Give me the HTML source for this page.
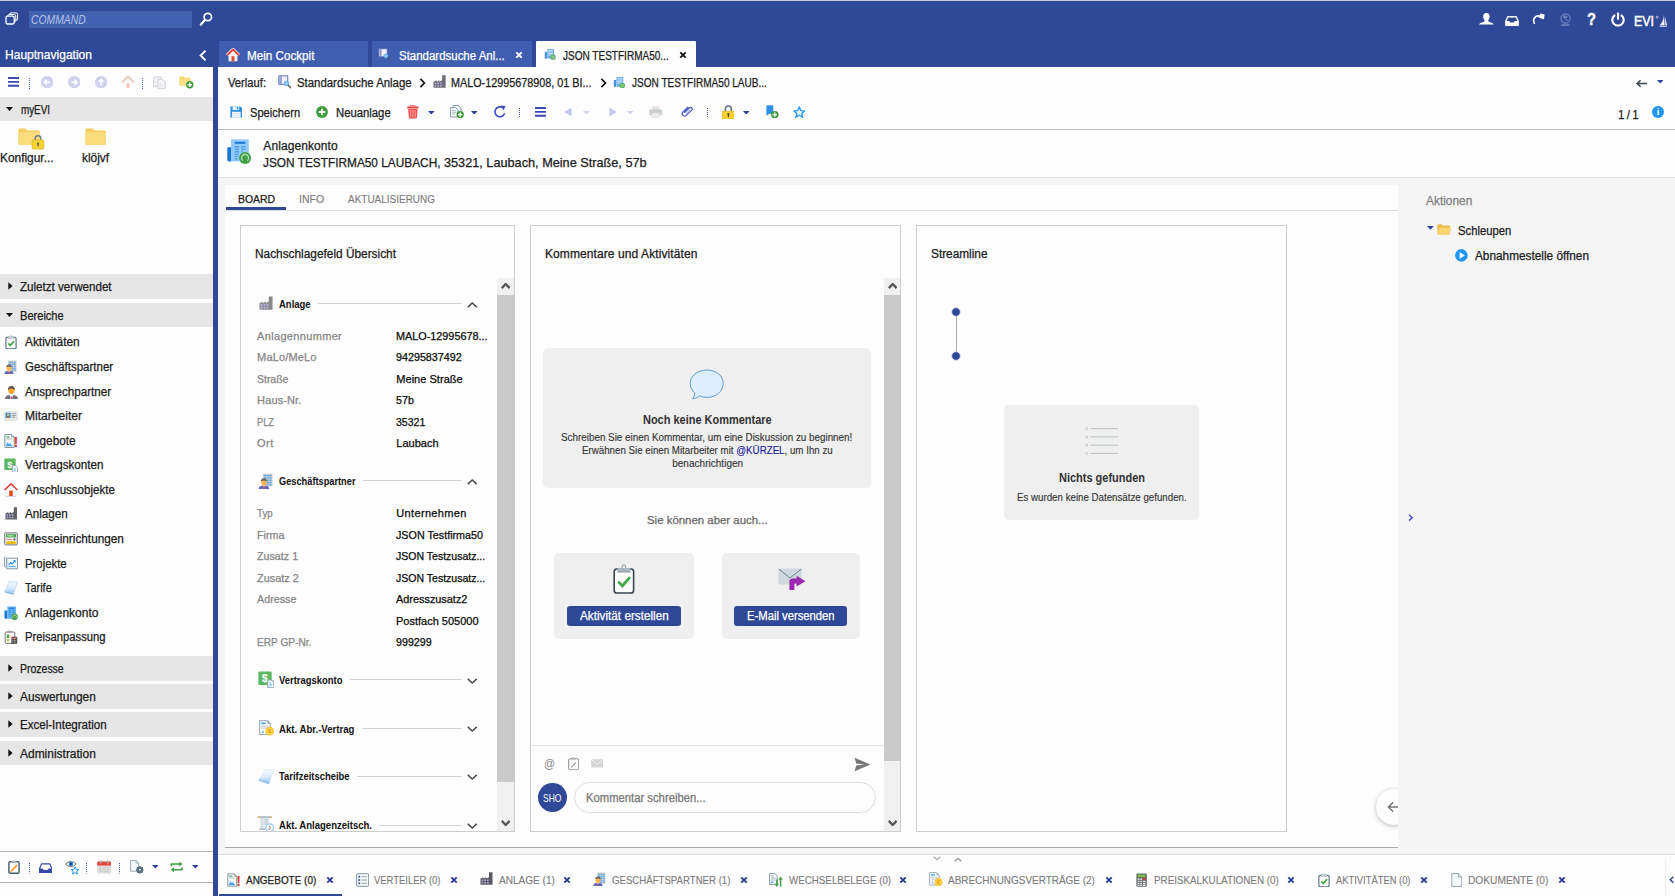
<!DOCTYPE html>
<html lang="de"><head><meta charset="utf-8"><title>EVI - Anlagenkonto</title>
<style>
*{margin:0;padding:0;box-sizing:border-box}
html,body{width:1675px;height:896px;overflow:hidden;background:#fdfdfd;font-family:"Liberation Sans", sans-serif;}
#app{position:relative;width:1675px;height:896px;overflow:hidden;background:#fdfdfd}
.r{position:absolute;display:block}
.t{position:absolute;white-space:nowrap;display:block;transform-origin:0 50%;-webkit-text-stroke:0.25px currentColor}
</style></head>
<body><div id="app">
<div class="r" style="left:0px;top:0px;width:1675px;height:67px;background:#2f4898;"></div>
<div class="r" style="left:0px;top:0px;width:1675px;height:1px;background:#c9cede;"></div>
<div class="r" style="left:213px;top:67px;width:5px;height:829px;background:#2f4898;"></div>
<div class="r" style="left:218px;top:177px;width:1457px;height:678px;background:#f5f5f5;"></div>
<div class="r" style="left:218px;top:129px;width:1457px;height:1px;background:#b9b9b9;"></div>
<div class="r" style="left:218px;top:177px;width:1457px;height:1px;background:#e2e2e2;"></div>
<div class="r" style="left:225px;top:185px;width:1173px;height:662px;background:#fdfdfd;"></div>
<div class="r" style="left:225px;top:210px;width:1173px;height:1px;background:#dcdcdc;"></div>
<div class="r" style="left:225px;top:847px;width:1173px;height:1px;background:#a9a9a9;"></div>
<div class="r" style="left:218px;top:854px;width:1457px;height:1px;background:#dedede;"></div>
<div class="r" style="left:218px;top:855px;width:1457px;height:41px;background:#fdfdfd;"></div>
<svg class="r" style="left:5px;top:11.5px;" width="14" height="14" viewBox="0 0 14 14"><rect x="4.6" y="0.9" width="8" height="7.4" rx="1.4" fill="#2f4898" stroke="#fff" stroke-width="1"/><rect x="2.8" y="2.5" width="8" height="7.4" rx="1.4" fill="#2f4898" stroke="#fff" stroke-width="1"/><rect x="1" y="4.2" width="8.2" height="7.8" rx="1.4" fill="#2f4898" stroke="#fff" stroke-width="1.3"/></svg>
<div class="r" style="left:29px;top:11px;width:163px;height:17px;background:#4161b1;"></div>
<span class="t" style="transform:scaleX(0.8638);left:30.6px;top:12.21px;font-size:12px;line-height:16px;color:#b4c1e6;font-style:italic;-webkit-text-stroke:0;">COMMAND</span>
<svg class="r" style="left:199px;top:11px;" width="15" height="16" viewBox="0 0 15 16"><circle cx="8.8" cy="6" r="3.7" fill="none" stroke="#fff" stroke-width="1.7"/><path d="M6.2 8.8 L1.8 13.6" stroke="#fff" stroke-width="2.2" stroke-linecap="round"/></svg>
<span class="t" style="letter-spacing:0.018px;left:5px;top:47.41px;font-size:12px;line-height:16px;color:#fff;">Hauptnavigation</span>
<svg class="r" style="left:198px;top:49px;" width="10" height="13" viewBox="0 0 10 13"><path d="M7.6 1.6 L2.6 6.5 L7.6 11.4" fill="none" stroke="#fff" stroke-width="1.9"/></svg>
<div class="r" style="left:219px;top:41px;width:149px;height:26px;background:#3f5eaf;"></div>
<div class="r" style="left:372px;top:41px;width:160px;height:26px;background:#3f5eaf;"></div>
<div class="r" style="left:536px;top:41px;width:160px;height:26px;background:#fdfdfd;border-radius:1px 1px 0 0;"></div>
<span class="t" style="transform:scaleX(0.9718);left:246.6px;top:48.21px;font-size:12px;line-height:16px;color:#fff;">Mein Cockpit</span>
<span class="t" style="transform:scaleX(0.9553);left:399px;top:48.21px;font-size:12px;line-height:16px;color:#fff;">Standardsuche Anl...</span>
<span class="t" style="transform:scaleX(0.8358);left:563px;top:48.21px;font-size:12px;line-height:16px;color:#1a1a1a;">JSON TESTFIRMA50...</span>
<svg class="r" style="left:514px;top:50.4px;" width="10" height="10" viewBox="0 0 10 10"><path d="M2.3 2.3 L7.7 7.7 M7.7 2.3 L2.3 7.7" stroke="#fff" stroke-width="1.9"/></svg>
<svg class="r" style="left:677.8px;top:50.4px;" width="10" height="10" viewBox="0 0 10 10"><path d="M2.3 2.3 L7.7 7.7 M7.7 2.3 L2.3 7.7" stroke="#111" stroke-width="1.9"/></svg>
<svg class="r" style="left:1479px;top:13.4px;" width="15" height="12" viewBox="0 0 15 12"><ellipse cx="7.4" cy="3.7" rx="3.2" ry="3.7" fill="#fff"/><path d="M5.6 6.4 H9.2 V8 Q9.4 8.8 11.2 9.3 Q14.6 10 14.8 11.6 H0 Q0.2 10 3.6 9.3 Q5.4 8.8 5.6 8 Z" fill="#fff"/></svg>
<svg class="r" style="left:1505.4px;top:15.6px;" width="14" height="10" viewBox="0 0 14 10"><path d="M2.8 0.8 H11.2 L13.2 5 V9.2 H0.8 V5 Z" fill="none" stroke="#fff" stroke-width="1.4" stroke-linejoin="round"/><path d="M0.8 5 H4.2 L5.2 6.6 H8.8 L9.8 5 H13.2 V9.2 H0.8 Z" fill="#fff"/></svg>
<svg class="r" style="left:1532px;top:13px;" width="13" height="12" viewBox="0 0 13 12"><path d="M2.6 10.8 C-0.2 6 3.6 1.6 8.6 3.4" fill="none" stroke="#fff" stroke-width="1.6"/><path d="M8.4 0.6 L12.6 1.4 L12 6.4 L6.6 4.6 Z" fill="#fff"/></svg>
<svg class="r" style="left:1559px;top:13px;" width="13" height="14" viewBox="0 0 13 14"><circle cx="6.5" cy="5.5" r="4.6" fill="none" stroke="#6f80b8" stroke-width="1.2"/><path d="M4 3 Q7 1.5 8.5 4 Q7 6.5 5 5 Z M6 7 Q8.5 6 9.5 8" fill="#6f80b8" stroke="#6f80b8" stroke-width=".6"/><rect x="2.5" y="11.2" width="8" height="1.8" fill="#6f80b8"/></svg>
<span class="t" style="transform:scaleX(0.8662);left:1587.2px;top:9.88px;font-size:17px;line-height:20px;color:#fff;font-weight:700;-webkit-text-stroke:0;-webkit-text-stroke:0.4px #fff;">?</span>
<svg class="r" style="left:1611px;top:12px;" width="14" height="15" viewBox="0 0 14 15"><path d="M4.2 3 A5.7 5.7 0 1 0 9.8 3" fill="none" stroke="#fff" stroke-width="2.1"/><path d="M7 0.6 V7.6" stroke="#fff" stroke-width="2.1"/></svg>
<span class="t" style="transform:scaleX(0.8858);left:1634.4px;top:12.32px;font-size:14px;line-height:18px;color:#fff;-webkit-text-stroke:0.5px #fff;">EVI</span>
<svg class="r" style="left:1655px;top:13px;" width="13" height="15" viewBox="0 0 13 15"><circle cx="2.2" cy="4.2" r="1" fill="none" stroke="#e6e9f4" stroke-width=".7"/><path d="M9 1.4 Q8.6 8 4.6 12.6 H9.6 Z" fill="#fff" opacity=".92"/><path d="M9.9 3.4 Q11.2 8 12.2 12.4 L10.3 12.6 Z" fill="#dfe4f2"/><path d="M4.2 13.2 H12 L11.4 14 H5 Z" fill="#e8ebf5"/></svg>
<svg class="r" style="left:226.2px;top:47.8px;opacity:1;" width="14" height="14" viewBox="0 0 14 14"><path d="M1 7.4 L7 1.6 L13 7.4" fill="none" stroke="#f4f4f4" stroke-width="3.4" stroke-linejoin="miter"/><path d="M2.6 7 L7 2.9 L11.4 7 V13.2 H2.6 Z" fill="#f6f6f6"/><path d="M1 7.4 L7 1.6 L13 7.4" fill="none" stroke="#d9432f" stroke-width="1.8" stroke-linejoin="miter"/><rect x="5.5" y="8.2" width="3" height="5" fill="#e04a30"/></svg>
<svg class="r" style="left:378px;top:47.5px;" width="12.8" height="12.8" viewBox="0 0 16 16"><rect x="1" y="1" width="10.5" height="10" fill="#eef0fb" stroke="#5563b8" stroke-width="1"/><path d="M3.6 1 V11" stroke="#5563b8" stroke-width="1"/><path d="M1 3.6 H3.6 M1 6 H3.6 M1 8.4 H3.6" stroke="#5563b8" stroke-width=".8"/><circle cx="10" cy="10" r="2.7" fill="#8fd0f6" stroke="#4a9be0" stroke-width=".9"/><path d="M12 12 L15 15" stroke="#555" stroke-width="1.6" stroke-linecap="round"/></svg>
<svg class="r" style="left:544px;top:48px;" width="12.48" height="12.48" viewBox="0 0 16 16"><rect x="1" y="5" width="3" height="8.5" fill="#4a90e2"/><rect x="4.2" y="1.2" width="8.6" height="12.3" fill="#6fb1f0"/><path d="M5.4 3 H11.6 M5.4 5 H11.6 M5.4 7 H11.6 M5.4 9 H11.6" stroke="#d7ebfc" stroke-width="1"/><circle cx="11.6" cy="11.8" r="3.4" fill="#4caf50"/><circle cx="11.6" cy="11.8" r="1.6" fill="none" stroke="#bfe6c1" stroke-width=".9"/></svg>
<svg class="r" style="left:8px;top:77px;" width="11" height="10" viewBox="0 0 11 10"><path d="M0 1 H11 M0 4.9 H11 M0 8.8 H11" stroke="#3a4ab0" stroke-width="1.9"/></svg>
<svg class="r" style="left:28.8px;top:77.9px;" width="1" height="11" viewBox="0 0 1 11"><path d="M0.5 0 V11" stroke="#4b5fb0" stroke-width="1" stroke-dasharray="1 1"/></svg>
<svg class="r" style="left:41px;top:75.8px;" width="12.4" height="12.4" viewBox="0 0 12.4 12.4"><circle cx="6.2" cy="6.2" r="6.2" fill="#cfd1ee"/><path d="M9 6.2 H3.6 M5.8 3.8 L3.4 6.2 L5.8 8.6" fill="none" stroke="#fff" stroke-width="1.6"/></svg>
<svg class="r" style="left:68px;top:75.8px;" width="12.4" height="12.4" viewBox="0 0 12.4 12.4"><circle cx="6.2" cy="6.2" r="6.2" fill="#cfd1ee"/><path d="M3.4 6.2 H8.8 M6.6 3.8 L9 6.2 L6.6 8.6" fill="none" stroke="#fff" stroke-width="1.6"/></svg>
<svg class="r" style="left:94.5px;top:75.8px;" width="12.4" height="12.4" viewBox="0 0 12.4 12.4"><circle cx="6.2" cy="6.2" r="6.2" fill="#cfd1ee"/><path d="M6.2 9 V3.6 M3.8 5.8 L6.2 3.4 L8.6 5.8" fill="none" stroke="#fff" stroke-width="1.6"/></svg>
<svg class="r" style="left:120.5px;top:75px;opacity:0.3;" width="14" height="14" viewBox="0 0 14 14"><path d="M2.6 7 L7 2.9 L11.4 7 V13.2 H2.6 Z" fill="#f6f6f6"/><path d="M1 7.4 L7 1.6 L13 7.4" fill="none" stroke="#d9432f" stroke-width="1.8" stroke-linejoin="miter"/><rect x="5.5" y="8.2" width="3" height="5" fill="#e04a30"/></svg>
<svg class="r" style="left:141.8px;top:77.9px;" width="1" height="11" viewBox="0 0 1 11"><path d="M0.5 0 V11" stroke="#4b5fb0" stroke-width="1" stroke-dasharray="1 1"/></svg>
<svg class="r" style="left:153px;top:76px;" width="13" height="13" viewBox="0 0 13 13"><rect x="0.6" y="1" width="7.4" height="9.4" fill="#f1f1f3" stroke="#d3d4dc"/><path d="M5 3.4 H9.6 L12.2 6 V12.4 H5 Z" fill="#f7f7f9" stroke="#cfd0d9"/><path d="M6.6 8 H10.4 M6.6 10 H10.4" stroke="#dcdde4" stroke-width=".9"/></svg>
<svg class="r" style="left:178.5px;top:75px;" width="15" height="14" viewBox="0 0 15 14"><path d="M0.5 1.5 H4.8 L6 2.8 H11.5 V10.5 H0.5 Z" fill="#f7d56b"/><path d="M0.5 3.6 H11.5 V10.5 H0.5 Z" fill="#fbdf83"/><circle cx="10.8" cy="9.8" r="3.7" fill="#3d9b3d"/><path d="M10.8 7.6 V12 M8.6 9.8 H13" stroke="#fff" stroke-width="1.5"/></svg>
<div class="r" style="left:0px;top:96.6px;width:213px;height:24.2px;background:#e6e6e6;"></div>
<svg class="r" style="left:6px;top:106.7px;" width="7" height="4" viewBox="0 0 7 4"><path d="M0 0 H7 L3.5 4 Z" fill="#111"/></svg>
<span class="t" style="transform:scaleX(0.8205);left:20.6px;top:101.51px;font-size:12px;line-height:16px;color:#1a1a1a;">myEVI</span>
<svg class="r" style="left:18px;top:127.5px;" width="28" height="22" viewBox="0 0 28 22"><path d="M0.5 1.2 Q0.5 0.5 1.3 0.5 H7.6 L9.4 2.4 H21 Q21.8 2.4 21.8 3.2 V16 Q21.8 16.8 21 16.8 H1.3 Q0.5 16.8 0.5 16 Z" fill="#f3cd60"/><path d="M0.5 4.2 H21.8 V16 Q21.8 16.8 21 16.8 H1.3 Q0.5 16.8 0.5 16 Z" fill="#fbdc7d"/><path d="M17.2 12.4 V10.6 A2.8 2.8 0 0 1 22.8 10.6 V12.4" fill="none" stroke="#6a7f8c" stroke-width="1.4"/><rect x="14.2" y="12" width="11.6" height="9" rx="1" fill="#f7d530" stroke="#d9ad1a" stroke-width=".7"/><circle cx="20" cy="15.6" r="1.1" fill="#55606a"/><rect x="19.4" y="15.6" width="1.2" height="3" fill="#55606a"/></svg>
<svg class="r" style="left:85px;top:127.5px;" width="22" height="18" viewBox="0 0 22 18"><path d="M0.5 1.2 Q0.5 0.5 1.3 0.5 H7.6 L9.4 2.4 H20 Q20.8 2.4 20.8 3.2 V16 Q20.8 16.8 20 16.8 H1.3 Q0.5 16.8 0.5 16 Z" fill="#f3cd60"/><path d="M0.5 4.2 H20.8 V16 Q20.8 16.8 20 16.8 H1.3 Q0.5 16.8 0.5 16 Z" fill="#fbdc7d"/></svg>
<span class="t" style="transform:scaleX(0.9917);left:-0.2px;top:150.21px;font-size:12px;line-height:16px;color:#1a1a1a;">Konfigur...</span>
<span class="t" style="transform:scaleX(0.9911);left:81.5px;top:150.21px;font-size:12px;line-height:16px;color:#1a1a1a;">klöjvf</span>
<div class="r" style="left:0px;top:274px;width:213px;height:24.5px;background:#e6e6e6;"></div>
<svg class="r" style="left:7.5px;top:282.3px;" width="5" height="8" viewBox="0 0 5 8"><path d="M0.3 0.3 L4.6 4 L0.3 7.7 Z" fill="#111"/></svg>
<span class="t" style="transform:scaleX(0.9671);left:20px;top:279.01px;font-size:12px;line-height:16px;color:#1a1a1a;">Zuletzt verwendet</span>
<div class="r" style="left:0px;top:303px;width:213px;height:24px;background:#e6e6e6;"></div>
<svg class="r" style="left:6px;top:313.0px;" width="7" height="4" viewBox="0 0 7 4"><path d="M0 0 H7 L3.5 4 Z" fill="#111"/></svg>
<span class="t" style="transform:scaleX(0.9224);left:20px;top:308.01px;font-size:12px;line-height:16px;color:#1a1a1a;">Bereiche</span>
<div class="r" style="left:0px;top:656px;width:213px;height:24.5px;background:#e6e6e6;"></div>
<svg class="r" style="left:7.5px;top:664.3px;" width="5" height="8" viewBox="0 0 5 8"><path d="M0.3 0.3 L4.6 4 L0.3 7.7 Z" fill="#111"/></svg>
<span class="t" style="transform:scaleX(0.8735);left:20px;top:661.01px;font-size:12px;line-height:16px;color:#1a1a1a;">Prozesse</span>
<div class="r" style="left:0px;top:684px;width:213px;height:24.5px;background:#e6e6e6;"></div>
<svg class="r" style="left:7.5px;top:692.3px;" width="5" height="8" viewBox="0 0 5 8"><path d="M0.3 0.3 L4.6 4 L0.3 7.7 Z" fill="#111"/></svg>
<span class="t" style="transform:scaleX(0.9880);left:20px;top:689.01px;font-size:12px;line-height:16px;color:#1a1a1a;">Auswertungen</span>
<div class="r" style="left:0px;top:712px;width:213px;height:24.5px;background:#e6e6e6;"></div>
<svg class="r" style="left:7.5px;top:720.3px;" width="5" height="8" viewBox="0 0 5 8"><path d="M0.3 0.3 L4.6 4 L0.3 7.7 Z" fill="#111"/></svg>
<span class="t" style="transform:scaleX(0.9617);left:20px;top:717.01px;font-size:12px;line-height:16px;color:#1a1a1a;">Excel-Integration</span>
<div class="r" style="left:0px;top:740.8px;width:213px;height:24.5px;background:#e6e6e6;"></div>
<svg class="r" style="left:7.5px;top:749.0999999999999px;" width="5" height="8" viewBox="0 0 5 8"><path d="M0.3 0.3 L4.6 4 L0.3 7.7 Z" fill="#111"/></svg>
<span class="t" style="transform:scaleX(0.9970);left:20px;top:745.81px;font-size:12px;line-height:16px;color:#1a1a1a;">Administration</span>
<span class="t" style="transform:scaleX(0.9881);left:25px;top:334.41px;font-size:12px;line-height:16px;color:#1a1a1a;">Aktivitäten</span>
<svg class="r" style="left:4px;top:335.2px;" width="14" height="14" viewBox="0 0 14 14"><rect x="1.9" y="2.4" width="10.2" height="11.4" rx="1.3" fill="#fff" stroke="#546e7a" stroke-width="1.1"/><path d="M4 3.4 V2 Q4 1.5 4.5 1.5 H5.9 Q7 -0.4 8.1 1.5 H9.5 Q10 1.5 10 2 V3.4 Z" fill="#cfd8dc" stroke="#90a4ae" stroke-width=".5"/><path d="M4.3 8.4 L6.3 10.4 L10 6.2" fill="none" stroke="#3faa3f" stroke-width="1.7"/></svg>
<span class="t" style="transform:scaleX(0.9571);left:25px;top:358.99px;font-size:12px;line-height:16px;color:#1a1a1a;">Geschäftspartner</span>
<svg class="r" style="left:3.2px;top:359.78px;" width="14" height="14" viewBox="0 0 14 14"><rect x="5.2" y="0.6" width="8.2" height="11" fill="#c9c9c9"/><g fill="#42a5f5"><rect x="6.1" y="1.8" width="1.7" height="1"/><rect x="8.5" y="1.8" width="1.7" height="1"/><rect x="10.9" y="1.8" width="1.7" height="1"/><rect x="6.1" y="3.8" width="1.7" height="1"/><rect x="8.5" y="3.8" width="1.7" height="1"/><rect x="10.9" y="3.8" width="1.7" height="1"/><rect x="8.5" y="5.8" width="1.7" height="1"/><rect x="10.9" y="5.8" width="1.7" height="1"/><rect x="8.5" y="7.8" width="1.7" height="1"/><rect x="10.9" y="7.8" width="1.7" height="1"/><rect x="8.5" y="9.6" width="1.7" height="1"/><rect x="10.9" y="9.6" width="1.7" height="1"/></g><path d="M3.4 7.2 Q3.4 4.6 6 4.6 Q8.6 4.6 8.6 7.2 Z" fill="#5c5f66"/><ellipse cx="6" cy="8.4" rx="2.3" ry="2.7" fill="#ffb74d"/><path d="M3.6 7.2 Q6 5.6 8.4 7.2 L8.4 6.4 Q6 4.6 3.6 6.4 Z" fill="#5c5f66"/><path d="M1.4 14 Q1.4 11.2 4.4 11 L6 12 L7.6 11 Q10.6 11.2 10.6 14 Z" fill="#5c6bc0"/><path d="M5.6 11.4 H6.4 L6.6 13.4 L6 14 L5.4 13.4 Z" fill="#ef5350"/></svg>
<span class="t" style="transform:scaleX(0.9705);left:25px;top:383.57px;font-size:12px;line-height:16px;color:#1a1a1a;">Ansprechpartner</span>
<svg class="r" style="left:4.3px;top:384.66px;" width="14.84" height="14.84" viewBox="0 0 14 14"><path d="M3.8 5 Q3.8 1 7 1 Q10.2 1 10.2 5 Z" fill="#4a4a50"/><ellipse cx="7" cy="5.2" rx="2.9" ry="3.3" fill="#ffa726"/><path d="M4 4.4 Q7 2.4 10 4.4 L10 3.4 Q7 0.6 4 3.4 Z" fill="#4a4a50"/><path d="M0.8 14 Q0.8 9.8 4.8 9.4 L7 11 L9.2 9.4 Q13.2 9.8 13.2 14 Z" fill="#69727a"/><path d="M5.6 9.6 L7 10.6 L8.4 9.6 L7.6 13.6 H6.4 Z" fill="#eceff1"/><path d="M6.6 10.6 H7.4 L7.7 13.2 L7 14 L6.3 13.2 Z" fill="#ec407a"/></svg>
<span class="t" style="letter-spacing:0.028px;left:25px;top:408.15px;font-size:12px;line-height:16px;color:#1a1a1a;">Mitarbeiter</span>
<svg class="r" style="left:4px;top:408.94px;" width="14" height="14" viewBox="0 0 14 14"><rect x="0.6" y="2.6" width="12.8" height="8.6" rx="0.8" fill="#e8eaed" stroke="#cfd3d8" stroke-width=".6"/><rect x="1.6" y="3.8" width="5" height="5.2" fill="#1e88e5"/><circle cx="4.1" cy="5.8" r="1.3" fill="#ffb74d"/><path d="M2.2 9 Q2.2 7.4 4.1 7.4 Q6 7.4 6 9 Z" fill="#ef6c00"/><path d="M7.8 4.6 H12.2 M7.8 6.4 H12.2 M7.8 8.2 H11" stroke="#9aa3ab" stroke-width="1"/></svg>
<span class="t" style="transform:scaleX(0.9866);left:25px;top:432.73px;font-size:12px;line-height:16px;color:#1a1a1a;">Angebote</span>
<svg class="r" style="left:4px;top:433.52px;" width="14" height="14" viewBox="0 0 14 14"><path d="M0.9 0.6 H7.8 L10.2 3 V13.4 H0.9 Z" fill="#fff" stroke="#78909c" stroke-width="1"/><path d="M7.6 0.8 V3.2 H10" fill="none" stroke="#78909c" stroke-width=".8"/><path d="M2.4 3 H5.6" stroke="#2e7d32" stroke-width="1"/><path d="M2.4 5 H8.2" stroke="#90a4ae" stroke-width=".8"/><path d="M2 11.6 L3.6 8 L5 10.2 L6.2 8.8 L7.8 11.6 Z" fill="#42a5f5"/><path d="M2 11.8 H8.4" stroke="#1e88e5" stroke-width=".8"/><text x="12" y="13.4" text-anchor="middle" font-family="Liberation Sans, sans-serif" font-weight="700" font-size="14.6" fill="#e53935">!</text></svg>
<span class="t" style="transform:scaleX(0.9738);left:25px;top:457.31px;font-size:12px;line-height:16px;color:#1a1a1a;">Vertragskonten</span>
<svg class="r" style="left:4px;top:458.09999999999997px;" width="14" height="14" viewBox="0 0 14 14"><rect x="0.3" y="0.4" width="11.4" height="11.6" rx="1" fill="#5cb860"/><text x="5.9" y="9.6" text-anchor="middle" font-family="Liberation Sans, sans-serif" font-weight="700" font-size="9.6" fill="#fff">$</text><path d="M8.3 7.6 H11.6 L13.6 9.6 V14.2 H8.3 Z" fill="#fff" stroke="#90a4ae" stroke-width=".9"/><path d="M9.6 10 H11.4 M9.6 11.4 H12.2 M9.6 12.8 H11.6" stroke="#64b5f6" stroke-width=".8"/></svg>
<span class="t" style="transform:scaleX(0.9616);left:25px;top:481.89px;font-size:12px;line-height:16px;color:#1a1a1a;">Anschlussobjekte</span>
<svg class="r" style="left:4px;top:482.67999999999995px;" width="14" height="14" viewBox="0 0 14 14"><path d="M0.6 7 L7 0.9 L13.4 7" fill="none" stroke="#e53935" stroke-width="1.7"/><path d="M2.4 6.8 L7 2.6 L11.6 6.8 V13.4 H2.4 Z" fill="#fbfbfe" stroke="#e4e4f0" stroke-width=".6"/><path d="M1.6 13.4 H12.4" stroke="#d4d6ee" stroke-width="1.2"/><rect x="5.2" y="7.6" width="3.6" height="5.4" fill="#e64a19"/><rect x="5.6" y="5.6" width="2.8" height="1.6" fill="#e64a19" opacity=".0"/></svg>
<span class="t" style="transform:scaleX(0.9694);left:25px;top:506.47px;font-size:12px;line-height:16px;color:#1a1a1a;">Anlagen</span>
<svg class="r" style="left:4.8px;top:507.46px;" width="12.6" height="12.6" viewBox="0 0 14 14"><path d="M0.5 13.8 V7.2 L3.6 5.6 V7.2 L6.8 5.6 V7.2 L9.8 5.6 V0.4 H13.6 V13.8 Z" fill="#606068"/><g fill="#b7b2f0"><rect x="1.8" y="8.2" width="1.7" height="1.6"/><rect x="4.7" y="8.2" width="1.7" height="1.6"/><rect x="7.6" y="8.2" width="1.7" height="1.6"/><rect x="1.8" y="10.9" width="1.7" height="1.6"/><rect x="4.7" y="10.9" width="1.7" height="1.6"/><rect x="7.6" y="10.9" width="1.7" height="1.6"/></g></svg>
<span class="t" style="transform:scaleX(0.9818);left:25px;top:531.05px;font-size:12px;line-height:16px;color:#1a1a1a;">Messeinrichtungen</span>
<svg class="r" style="left:4px;top:531.8399999999999px;" width="14" height="14" viewBox="0 0 14 14"><rect x="0.7" y="0.9" width="12.6" height="12" rx="0.8" fill="#f3f3f3" stroke="#6d7378" stroke-width="1"/><rect x="2" y="2.2" width="10" height="3.2" fill="#43a047"/><rect x="3" y="3" width="6.4" height="1.6" fill="#a5d6a7"/><circle cx="10.4" cy="7.4" r="1.1" fill="#455a64"/><path d="M2.4 7.4 H8" stroke="#e57373" stroke-width=".9"/><rect x="2" y="9.4" width="10" height="2.6" fill="#f9c81c"/><path d="M4 9.4 V12 M6 9.4 V12 M8 9.4 V12 M10 9.4 V12" stroke="#c79a00" stroke-width=".6"/></svg>
<span class="t" style="transform:scaleX(0.9471);left:25px;top:555.63px;font-size:12px;line-height:16px;color:#1a1a1a;">Projekte</span>
<svg class="r" style="left:4px;top:556.42px;" width="14" height="14" viewBox="0 0 14 14"><path d="M1.6 0.8 Q0.5 0.8 0.5 2 V10 Q0.5 11.2 1.6 11.2 Q2.8 11.2 2.8 10 V2.2" fill="#e3f2fd" stroke="#78909c" stroke-width=".8"/><rect x="2.8" y="2.2" width="10.6" height="10.6" fill="#f5fbff" stroke="#78909c" stroke-width=".9"/><path d="M4.6 8.8 L6.6 6.6 L8 7.8 L11 4.8" fill="none" stroke="#1e88e5" stroke-width="1.2"/><path d="M9.4 4.6 H11.2 V6.4" fill="none" stroke="#1e88e5" stroke-width="1"/><path d="M4.4 10.6 H11.6" stroke="#42a5f5" stroke-width="1"/></svg>
<span class="t" style="transform:scaleX(0.9099);left:25px;top:580.21px;font-size:12px;line-height:16px;color:#1a1a1a;">Tarife</span>
<svg class="r" style="left:4px;top:581.0px;" width="14" height="14" viewBox="0 0 14 14"><defs><linearGradient id="tg1" x1="0" y1="0" x2="0" y2="1"><stop offset="0" stop-color="#f3f9ff"/><stop offset=".55" stop-color="#d6e9fb"/><stop offset="1" stop-color="#8fc2ee"/></linearGradient></defs><path d="M4.6 0.8 H13.4 Q11.4 8 9.4 13.2 L0.6 11 Q3.4 6 4.6 0.8 Z" fill="url(#tg1)" stroke="#b5d5f2" stroke-width=".6"/><path d="M0.8 11 L9.4 13.2" stroke="#6fa8dc" stroke-width=".8"/></svg>
<span class="t" style="letter-spacing:0.008px;left:25px;top:604.79px;font-size:12px;line-height:16px;color:#1a1a1a;">Anlagenkonto</span>
<svg class="r" style="left:4px;top:605.5799999999999px;" width="14" height="14" viewBox="0 0 14 14"><path d="M0.5 4.6 H3.4 V12.8 H1.7 Q0.5 12.8 0.5 11.6 Z" fill="#1976d2"/><rect x="3.4" y="0.5" width="8.6" height="12.3" fill="#64b5f6"/><path d="M4.8 2.2 H10.6" stroke="#1976d2" stroke-width="1.1"/><path d="M4.8 4.6 H7 M8.2 4.6 H10.6 M4.8 6.4 H7 M8.2 6.4 H10.6 M4.8 8.2 H7 M4.8 10 H6.6" stroke="#2f8ae0" stroke-width=".9"/><circle cx="10.6" cy="10.8" r="3.2" fill="#43a047"/><path d="M9.4 12 A1.7 1.7 0 1 1 11.8 12" fill="none" stroke="#c8e6c9" stroke-width=".8"/></svg>
<span class="t" style="transform:scaleX(0.9365);left:25px;top:629.37px;font-size:12px;line-height:16px;color:#1a1a1a;">Preisanpassung</span>
<svg class="r" style="left:4px;top:630.16px;" width="14" height="14" viewBox="0 0 14 14"><rect x="1.2" y="2" width="9.6" height="11.4" rx="1" fill="#fafafa" stroke="#757575" stroke-width="1"/><path d="M4 2.2 V1.4 H5 Q6 0 7 1.4 H8 V2.2 Z" fill="#bdbdbd" stroke="#8a8a8a" stroke-width=".5"/><rect x="2.8" y="4.6" width="2.2" height="3.4" fill="#43a047"/><path d="M5.6 5.6 L7.4 6.6 L5.6 7.6 Z" fill="#fbc02d"/><rect x="2.8" y="9" width="2.2" height="2.6" fill="#9ccc65"/><rect x="7.4" y="6.8" width="5.8" height="7" rx=".6" fill="#424242"/><rect x="8.2" y="7.6" width="4.2" height="1.6" fill="#e57373"/><path d="M8.4 10.4 H12.2 M8.4 12.2 H12.2" stroke="#bdbdbd" stroke-width="1" stroke-dasharray="1 .5"/></svg>
<div class="r" style="left:0px;top:851px;width:213px;height:1px;background:#b5b5b5;"></div>
<div class="r" style="left:0px;top:882px;width:213px;height:1px;background:#b5b5b5;"></div>
<svg class="r" style="left:7.5px;top:860px;" width="12" height="14" viewBox="0 0 12 14"><rect x="0.9" y="1.8" width="10.2" height="11.4" rx="1.2" fill="#fff" stroke="#455a64" stroke-width="1.4"/><path d="M3.6 2 V1.3 H4.8 Q6 -0.2 7.2 1.3 H8.4 V2 Z" fill="#c4ccd1" stroke="#9aa8b0" stroke-width=".5"/><path d="M2.8 10.6 L8.6 4.6 L9.6 5.6 L3.8 11.6 L2.4 12 Z" fill="#fb8c00"/></svg>
<svg class="r" style="left:28.5px;top:863.15px;" width="1" height="10.5" viewBox="0 0 1 10.5"><path d="M0.5 0 V10.5" stroke="#4656b0" stroke-width="1" stroke-dasharray="1 1"/></svg>
<svg class="r" style="left:38.8px;top:862.8px;" width="13.4" height="10" viewBox="0 0 13.4 10"><path d="M2.6 0.8 H10.8 L12.8 5.4 V9.4 H0.6 V5.4 Z" fill="#fff" stroke="#3949ab" stroke-width="1.2" stroke-linejoin="round"/><path d="M0.6 5.4 H3.8 L4.8 7 H8.6 L9.6 5.4 H12.8 V9.4 H0.6 Z" fill="#3949ab"/></svg>
<svg class="r" style="left:65px;top:859.8px;" width="15" height="15" viewBox="0 0 15 15"><path d="M0.5 4.2 Q5.8 -1.2 11.2 4.2 Q5.8 9.2 0.5 4.2 Z" fill="#fff" stroke="#666" stroke-width=".9"/><circle cx="5.9" cy="4" r="2.3" fill="#1e88e5"/><circle cx="5.9" cy="4" r="1" fill="#0d2a5c"/><path d="M10 6.8 L11.1 9.3 L13.8 9.5 L11.8 11.3 L12.4 14 L10 12.6 L7.6 14 L8.2 11.3 L6.2 9.5 L8.9 9.3 Z" fill="#fff" stroke="#2196f3" stroke-width="1"/></svg>
<svg class="r" style="left:86.4px;top:863.15px;" width="1" height="10.5" viewBox="0 0 1 10.5"><path d="M0.5 0 V10.5" stroke="#4656b0" stroke-width="1" stroke-dasharray="1 1"/></svg>
<svg class="r" style="left:97px;top:860px;" width="14.4" height="14" viewBox="0 0 14.4 14"><rect x="0.2" y="1.6" width="14" height="12" rx="1" fill="#dcdcdc"/><path d="M0.2 5.6 V2.6 Q0.2 1.6 1.2 1.6 H13.2 Q14.2 1.6 14.2 2.6 V5.6 Z" fill="#e8453c"/><rect x="3" y="0.2" width="1.6" height="3.4" rx=".6" fill="#b0b0b0"/><rect x="9.8" y="0.2" width="1.6" height="3.4" rx=".6" fill="#b0b0b0"/><path d="M2 7.6 H12.4 M2 9.6 H12.4 M2 11.6 H12.4" stroke="#c6c6c6" stroke-width=".8" stroke-dasharray="1.6 1"/></svg>
<svg class="r" style="left:118.5px;top:863.15px;" width="1" height="10.5" viewBox="0 0 1 10.5"><path d="M0.5 0 V10.5" stroke="#4656b0" stroke-width="1" stroke-dasharray="1 1"/></svg>
<svg class="r" style="left:129.6px;top:860px;" width="14" height="14" viewBox="0 0 14 14"><path d="M0.6 0.5 H6 L8.8 3.2 V11.2 H0.6 Z" fill="#f4f6f8" stroke="#90a4ae" stroke-width=".9"/><path d="M6 0.6 V3.2 H8.6" fill="none" stroke="#90a4ae" stroke-width=".7"/><circle cx="9.8" cy="9.8" r="2.5" fill="none" stroke="#546e7a" stroke-width="1.8"/><path d="M9.8 6 V13.6 M6 9.8 H13.6 M7.1 7.1 L12.5 12.5 M12.5 7.1 L7.1 12.5" stroke="#546e7a" stroke-width="1.2"/><circle cx="9.8" cy="9.8" r="1" fill="#fdfdfd"/></svg>
<svg class="r" style="left:151.7px;top:865.4000000000001px;" width="6.6" height="3.6" viewBox="0 0 6.6 3.6"><path d="M0 0 H6.6 L3.3 3.6 Z" fill="#2f3f9f"/></svg>
<svg class="r" style="left:169.8px;top:861.2px;" width="13.4" height="11.8" viewBox="0 0 13.4 11.8"><path d="M1.4 5.2 V3 H10.6" fill="none" stroke="#43a047" stroke-width="1.6"/><path d="M9.4 0.4 L12.6 3 L9.4 5.6 Z" fill="#43a047"/><path d="M12 6.6 V8.8 H2.8" fill="none" stroke="#43a047" stroke-width="1.6"/><path d="M4 6.2 L0.8 8.8 L4 11.4 Z" fill="#43a047"/></svg>
<svg class="r" style="left:191.6px;top:865.4000000000001px;" width="6.6" height="3.6" viewBox="0 0 6.6 3.6"><path d="M0 0 H6.6 L3.3 3.6 Z" fill="#2f3f9f"/></svg>
<span class="t" style="transform:scaleX(0.9360);left:228.2px;top:75.11px;font-size:12px;line-height:16px;color:#222;">Verlauf:</span>
<svg class="r" style="left:277.5px;top:75px;" width="13.6" height="13.6" viewBox="0 0 16 16"><rect x="1" y="1" width="10.5" height="10" fill="#eef0fb" stroke="#5563b8" stroke-width="1"/><path d="M3.6 1 V11" stroke="#5563b8" stroke-width="1"/><path d="M1 3.6 H3.6 M1 6 H3.6 M1 8.4 H3.6" stroke="#5563b8" stroke-width=".8"/><circle cx="10" cy="10" r="2.7" fill="#8fd0f6" stroke="#4a9be0" stroke-width=".9"/><path d="M12 12 L15 15" stroke="#555" stroke-width="1.6" stroke-linecap="round"/></svg>
<span class="t" style="transform:scaleX(0.9489);left:296.6px;top:75.11px;font-size:12px;line-height:16px;color:#1a1a1a;">Standardsuche Anlage</span>
<svg class="r" style="left:419.0px;top:77.9px;" width="7" height="10" viewBox="0 0 7 10"><path d="M1.4 0.9 L5.4 5 L1.4 9.1" fill="none" stroke="#111" stroke-width="1.7"/></svg>
<svg class="r" style="left:433.2px;top:74.9px;" width="13.020000000000001" height="13.020000000000001" viewBox="0 0 14 14"><path d="M0.5 13.8 V7.2 L3.6 5.6 V7.2 L6.8 5.6 V7.2 L9.8 5.6 V0.4 H13.6 V13.8 Z" fill="#6e6e76"/><g fill="#b7b2f0"><rect x="1.8" y="8.2" width="1.7" height="1.6"/><rect x="4.7" y="8.2" width="1.7" height="1.6"/><rect x="7.6" y="8.2" width="1.7" height="1.6"/><rect x="1.8" y="10.9" width="1.7" height="1.6"/><rect x="4.7" y="10.9" width="1.7" height="1.6"/><rect x="7.6" y="10.9" width="1.7" height="1.6"/></g></svg>
<span class="t" style="transform:scaleX(0.9000);left:451.3px;top:75.11px;font-size:12px;line-height:16px;color:#1a1a1a;">MALO-12995678908, 01 BI...</span>
<svg class="r" style="left:599.8px;top:77.9px;" width="7" height="10" viewBox="0 0 7 10"><path d="M1.4 0.9 L5.4 5 L1.4 9.1" fill="none" stroke="#111" stroke-width="1.7"/></svg>
<svg class="r" style="left:613.3px;top:75.5px;" width="12.8" height="12.8" viewBox="0 0 16 16"><rect x="1" y="5" width="3" height="8.5" fill="#4a90e2"/><rect x="4.2" y="1.2" width="8.6" height="12.3" fill="#6fb1f0"/><path d="M5.4 3 H11.6 M5.4 5 H11.6 M5.4 7 H11.6 M5.4 9 H11.6" stroke="#d7ebfc" stroke-width="1"/><circle cx="11.6" cy="11.8" r="3.4" fill="#4caf50"/><circle cx="11.6" cy="11.8" r="1.6" fill="none" stroke="#bfe6c1" stroke-width=".9"/></svg>
<span class="t" style="transform:scaleX(0.8371);left:632.4px;top:75.11px;font-size:12px;line-height:16px;color:#1a1a1a;">JSON TESTFIRMA50 LAUB...</span>
<svg class="r" style="left:1636px;top:79px;" width="12" height="9" viewBox="0 0 12 9"><path d="M1 4.5 H11 M4.6 1.2 L1.2 4.5 L4.6 7.8" fill="none" stroke="#3b4a55" stroke-width="1.6"/></svg>
<svg class="r" style="left:1657px;top:80.3px;" width="6.4" height="3.4" viewBox="0 0 6.4 3.4"><path d="M0 0 H6.4 L3.2 3.4 Z" fill="#2f4898"/></svg>
<svg class="r" style="left:229.5px;top:106px;" width="12.6" height="12" viewBox="0 0 12.6 12"><path d="M0.4 0.4 H10.4 L12.2 2.2 V11.6 H0.4 Z" fill="#2f8fe3"/><rect x="2.6" y="0.4" width="6.6" height="3.6" fill="#e3f2fd"/><rect x="6.8" y="0.9" width="1.5" height="2.4" fill="#2f8fe3"/><rect x="2" y="5.8" width="8.6" height="5.8" fill="#f5f9fd"/><path d="M2 7.8 H10.6 M2 9.8 H10.6" stroke="#d0d8e0" stroke-width=".6"/></svg>
<span class="t" style="transform:scaleX(0.9270);left:249.5px;top:105.01px;font-size:12px;line-height:16px;color:#1a1a1a;">Speichern</span>
<svg class="r" style="left:316px;top:106.4px;" width="12" height="12" viewBox="0 0 12 12"><circle cx="6" cy="6" r="5.9" fill="#3d9b3d"/><path d="M6 2.8 V9.2 M2.8 6 H9.2" stroke="#fff" stroke-width="1.9"/></svg>
<span class="t" style="transform:scaleX(0.9421);left:336px;top:105.01px;font-size:12px;line-height:16px;color:#1a1a1a;">Neuanlage</span>
<svg class="r" style="left:407.2px;top:105px;" width="11.8" height="13.8" viewBox="0 0 11.8 13.8"><path d="M3.6 1.6 V0.9 Q3.6 0.3 4.2 0.3 H7.6 Q8.2 0.3 8.2 0.9 V1.6" fill="none" stroke="#e8423f" stroke-width=".9"/><rect x="0.3" y="1.6" width="11.2" height="1.9" rx=".5" fill="#e8423f"/><path d="M1.2 4 H10.6 L9.9 12.8 Q9.8 13.5 9.1 13.5 H2.7 Q2 13.5 1.9 12.8 Z" fill="#ef5350"/><path d="M3.7 5 V12.4 M5.9 5 V12.4 M8.1 5 V12.4" stroke="#f8a8a6" stroke-width=".9"/></svg>
<svg class="r" style="left:428.3px;top:110.5px;" width="6.6" height="3.6" viewBox="0 0 6.6 3.6"><path d="M0 0 H6.6 L3.3 3.6 Z" fill="#2f3f9f"/></svg>
<svg class="r" style="left:449.8px;top:105px;" width="14.4" height="13.4" viewBox="0 0 14.4 13.4"><path d="M3.2 0.5 H8.6 L11 2.9 V9.5 H3.2 Z" fill="#f4f6f8" stroke="#78909c" stroke-width=".9"/><path d="M0.6 2.6 H5.6 L7.8 4.8 V12 H0.6 Z" fill="#fdfdfd" stroke="#78909c" stroke-width=".9"/><path d="M2 5.4 H5.6 M2 7.2 H6.4 M2 9 H5" stroke="#90a4ae" stroke-width=".8"/><circle cx="10.2" cy="9.6" r="3.7" fill="#3d9b3d"/><path d="M10.2 7.4 V11.8 M8 9.6 H12.4" stroke="#fff" stroke-width="1.4"/></svg>
<svg class="r" style="left:471.3px;top:110.5px;" width="6.6" height="3.6" viewBox="0 0 6.6 3.6"><path d="M0 0 H6.6 L3.3 3.6 Z" fill="#2f3f9f"/></svg>
<svg class="r" style="left:494px;top:105px;" width="13" height="13" viewBox="0 0 13 13"><path d="M10.6 8.2 A4.9 4.9 0 1 1 8.4 2.6" fill="none" stroke="#3f4fc0" stroke-width="1.6"/><path d="M6.8 0.4 L11.6 1 L9.6 5.4 Z" fill="#3f4fc0"/></svg>
<svg class="r" style="left:519.3px;top:108.2px;" width="1" height="10" viewBox="0 0 1 10"><path d="M0.5 0 V10" stroke="#4656b0" stroke-width="1" stroke-dasharray="1 1"/></svg>
<svg class="r" style="left:535.4px;top:107.4px;" width="11" height="10" viewBox="0 0 11 10"><path d="M0 1 H11 M0 4.9 H11 M0 8.8 H11" stroke="#3a4ab0" stroke-width="1.9"/></svg>
<svg class="r" style="left:564px;top:107px;" width="8" height="10" viewBox="0 0 8 10"><path d="M7.6 0.4 V9.6 L0.4 5 Z" fill="#c5c8ee"/></svg>
<svg class="r" style="left:583.3px;top:110.5px;" width="6.6" height="3.6" viewBox="0 0 6.6 3.6"><path d="M0 0 H6.6 L3.3 3.6 Z" fill="#d0d2ee"/></svg>
<svg class="r" style="left:608.5px;top:107px;" width="8" height="10" viewBox="0 0 8 10"><path d="M0.4 0.4 V9.6 L7.6 5 Z" fill="#c5c8ee"/></svg>
<svg class="r" style="left:626.6px;top:110.5px;" width="6.6" height="3.6" viewBox="0 0 6.6 3.6"><path d="M0 0 H6.6 L3.3 3.6 Z" fill="#d0d2ee"/></svg>
<svg class="r" style="left:648.6px;top:106px;" width="13.2" height="11.6" viewBox="0 0 13.2 11.6"><rect x="3" y="0.3" width="7.2" height="3.4" fill="#e2e2e2"/><rect x="0.3" y="3.2" width="12.6" height="6" rx="1" fill="#cfcfcf"/><rect x="10.2" y="4.4" width="1.4" height="1" fill="#8fd6c0"/><rect x="2.8" y="7" width="7.6" height="4.3" fill="#ececec" stroke="#d5d5d5" stroke-width=".5"/></svg>
<svg class="r" style="left:681px;top:106.4px;" width="12" height="10.8" viewBox="0 0 12 10.8"><path d="M3.2 7.4 L8.2 2.6 Q9.6 1.4 10.8 2.6 Q11.8 3.8 10.6 5 L5.2 10 Q3.4 11.4 1.8 9.8 Q0.4 8.2 2 6.6 L7.2 1.6" fill="none" stroke="#4a55c0" stroke-width="1.2" transform="translate(0,-0.6)"/><path d="M4.6 8 L9 3.8" stroke="#8f97dd" stroke-width="1"/></svg>
<svg class="r" style="left:706.6px;top:108.2px;" width="1" height="10" viewBox="0 0 1 10"><path d="M0.5 0 V10" stroke="#4656b0" stroke-width="1" stroke-dasharray="1 1"/></svg>
<svg class="r" style="left:721.6px;top:104.6px;" width="12.8" height="14.2" viewBox="0 0 12.8 14.2"><path d="M3.4 6.6 V4 A3 3 0 0 1 9.4 4 V6.6" fill="none" stroke="#5f7380" stroke-width="1.6"/><rect x="0.4" y="6.2" width="12" height="7.7" rx=".8" fill="#fbd331" stroke="#d4a514" stroke-width=".6"/><circle cx="6.4" cy="9.2" r="1.1" fill="#4a4a4a"/><rect x="5.8" y="9.2" width="1.2" height="2.8" fill="#4a4a4a"/></svg>
<svg class="r" style="left:743.2px;top:110.5px;" width="6.6" height="3.6" viewBox="0 0 6.6 3.6"><path d="M0 0 H6.6 L3.3 3.6 Z" fill="#2f3f9f"/></svg>
<svg class="r" style="left:766.4px;top:105px;" width="12.8" height="13.4" viewBox="0 0 12.8 13.4"><path d="M0.4 0.8 Q0.4 0.3 0.9 0.3 H6.8 Q7.3 0.3 7.3 0.8 V10.8 L3.85 8.6 L0.4 10.8 Z" fill="#2f8fe3"/><circle cx="8.8" cy="9.6" r="3.7" fill="#3d9b3d"/><path d="M8.8 7.4 V11.8 M6.6 9.6 H11" stroke="#fff" stroke-width="1.4"/></svg>
<svg class="r" style="left:792.6px;top:106.4px;" width="12.6" height="12" viewBox="0 0 12.6 12"><path d="M6.3 1.2 L7.9 4.6 L11.6 5 L8.8 7.5 L9.6 11.1 L6.3 9.2 L3 11.1 L3.8 7.5 L1 5 L4.7 4.6 Z" fill="none" stroke="#2196f3" stroke-width="1.4" stroke-linejoin="miter"/></svg>
<span class="t" style="transform:scaleX(0.8842);left:1618px;top:106.97px;font-size:13px;line-height:16px;color:#222;word-spacing:-1px;">1 / 1</span>
<svg class="r" style="left:1652px;top:106px;" width="12" height="12" viewBox="0 0 12 12"><circle cx="6" cy="6" r="6" fill="#2196f3"/><text x="6" y="9.4" text-anchor="middle" font-family="Liberation Sans, sans-serif" font-weight="700" font-size="9.4" fill="#fff">i</text></svg>
<svg class="r" style="left:227px;top:138.6px;" width="25" height="26" viewBox="0 0 25 26"><path d="M0.3 8.2 H4 V22.4 H1.9 Q0.3 22.4 0.3 20.8 Z" fill="#1976d2"/><rect x="4" y="0.4" width="17.8" height="22" fill="#90caf9"/><rect x="7.8" y="2.7" width="10.6" height="2.1" rx=".6" fill="#1976d2"/><g fill="#4f9fe8"><rect x="7.8" y="7.2" width="4.2" height="1.5"/><rect x="14.2" y="7.2" width="4.2" height="1.5"/><rect x="7.8" y="9.7" width="4.2" height="1.3"/><rect x="14.2" y="9.7" width="4.2" height="1.3"/><rect x="7.8" y="12" width="4.2" height="1.5"/><rect x="14.2" y="12.2" width="1.4" height="1"/><rect x="7.8" y="14.7" width="3.8" height="1.3"/><rect x="7.8" y="17" width="3" height="1.2"/><rect x="7.8" y="19.4" width="2.8" height="1.2"/></g><circle cx="18.1" cy="19" r="6" fill="#43a047"/><path d="M15.9 21.6 A3.5 3.5 0 1 1 20.3 21.6" fill="none" stroke="#b7dfb9" stroke-width="1.2"/></svg>
<span class="t" style="letter-spacing:0.091px;left:263.3px;top:138.21px;font-size:12px;line-height:16px;color:#1a1a1a;">Anlagenkonto</span>
<span class="t" style="transform:scaleX(0.9111);left:263.3px;top:153.66px;font-size:13px;line-height:18px;color:#1a1a1a;">JSON TESTFIRMA50 LAUBACH,</span>
<span class="t" style="transform:scaleX(0.9767);left:443.8px;top:153.66px;font-size:13px;line-height:18px;color:#1a1a1a;">35321, Laubach, Meine Straße, 57b</span>
<span class="t" style="transform:scaleX(0.9482);left:237.5px;top:191.35px;font-size:11px;line-height:16px;color:#1a1a1a;">BOARD</span>
<span class="t" style="transform:scaleX(0.9589);left:299px;top:191.35px;font-size:11px;line-height:16px;color:#7a7a7a;-webkit-text-stroke:0.1px;">INFO</span>
<span class="t" style="transform:scaleX(0.9065);left:348px;top:191.35px;font-size:11px;line-height:16px;color:#7a7a7a;-webkit-text-stroke:0.1px;">AKTUALISIERUNG</span>
<div class="r" style="left:226px;top:207px;width:60px;height:3px;background:#2f4898;"></div>
<span class="t" style="transform:scaleX(0.9914);left:1426.3px;top:193.21px;font-size:12px;line-height:16px;color:#808080;">Aktionen</span>
<svg class="r" style="left:1426.8px;top:226.29999999999998px;" width="6.8" height="3.8" viewBox="0 0 6.8 3.8"><path d="M0 0 H6.8 L3.4 3.8 Z" fill="#2f3f9f"/></svg>
<svg class="r" style="left:1436.6px;top:224.4px;" width="14.6" height="11.2" viewBox="0 0 14.6 11.2"><path d="M0.4 0.9 Q0.4 0.3 1 0.3 H4.6 L5.8 1.6 H12.4 Q13 1.6 13 2.2 V10.4 H0.4 Z" fill="#e9b94a"/><path d="M2.2 3.6 H14.2 L12.8 10.8 H0.6 Z" fill="#fbd670"/></svg>
<span class="t" style="transform:scaleX(0.9380);left:1457.6px;top:223.41px;font-size:12px;line-height:16px;color:#1a1a1a;">Schleupen</span>
<svg class="r" style="left:1454.6px;top:249.2px;" width="13" height="13" viewBox="0 0 13 13"><circle cx="6.4" cy="6.4" r="6.3" fill="#2196f3"/><path d="M4.6 3 V9.8 L9.8 6.4 Z" fill="#fff"/></svg>
<span class="t" style="transform:scaleX(0.9838);left:1475px;top:247.81px;font-size:12px;line-height:16px;color:#1a1a1a;">Abnahmestelle öffnen</span>
<svg class="r" style="left:1408.2px;top:514px;" width="5.4" height="7.4" viewBox="0 0 5.4 7.4"><path d="M1 0.8 L4.2 3.7 L1 6.6" fill="none" stroke="#3b4cb0" stroke-width="1.4"/></svg>
<div class="r" style="left:1368px;top:780px;width:30px;height:60px;overflow:hidden"><div class="r" style="left:8px;top:9px;width:36px;height:36px;border-radius:50%;background:#fdfdfd;box-shadow:0 1px 4px rgba(0,0,0,.28)"></div><svg class="r" style="left:18.5px;top:21px" width="12" height="12" viewBox="0 0 12 12"><path d="M1.6 6 H12 M6.2 1.2 L1.4 6 L6.2 10.8" fill="none" stroke="#777" stroke-width="1.5"/></svg></div>
<div class="r" style="left:219px;top:894px;width:123px;height:2px;background:#2f4898;"></div>
<svg class="r" style="left:933px;top:856px;" width="8" height="5" viewBox="0 0 8 5"><path d="M0.8 0.8 L4 3.8 L7.2 0.8" fill="none" stroke="#a8a8a8" stroke-width="1.2"/></svg>
<svg class="r" style="left:953.5px;top:856.5px;" width="8" height="5" viewBox="0 0 8 5"><path d="M0.8 4.2 L4 1.2 L7.2 4.2" fill="none" stroke="#8e8e8e" stroke-width="1.2"/></svg>
<span class="t" style="transform:scaleX(0.9056);left:246.2px;top:872.15px;font-size:11px;line-height:16px;color:#222;">ANGEBOTE (0)</span>
<svg class="r" style="left:325px;top:874.5px;" width="10" height="10" viewBox="0 0 10 10"><path d="M2.3 2.3 L7.7 7.7 M7.7 2.3 L2.3 7.7" stroke="#2b3a9a" stroke-width="1.9"/></svg>
<svg class="r" style="left:226.8px;top:872.6px;" width="13.4" height="14.4" viewBox="0 0 14 14.4"><path d="M0.9 0.6 H7.8 L10.2 3 V13.4 H0.9 Z" fill="#fff" stroke="#78909c" stroke-width="1"/><path d="M7.6 0.8 V3.2 H10" fill="none" stroke="#78909c" stroke-width=".8"/><path d="M2.4 3 H5.6" stroke="#2e7d32" stroke-width="1"/><path d="M2.4 5 H8.2" stroke="#90a4ae" stroke-width=".8"/><path d="M2 11.6 L3.6 8 L5 10.2 L6.2 8.8 L7.8 11.6 Z" fill="#42a5f5"/><path d="M2 11.8 H8.4" stroke="#1e88e5" stroke-width=".8"/><text x="12" y="13.4" text-anchor="middle" font-family="Liberation Sans, sans-serif" font-weight="700" font-size="14.6" fill="#e53935">!</text></svg>
<span class="t" style="transform:scaleX(0.8588);left:374.1px;top:872.15px;font-size:11px;line-height:16px;color:#7a7a7a;-webkit-text-stroke:0.1px;">VERTEILER (0)</span>
<svg class="r" style="left:449.2px;top:874.5px;" width="10" height="10" viewBox="0 0 10 10"><path d="M2.3 2.3 L7.7 7.7 M7.7 2.3 L2.3 7.7" stroke="#2b3a9a" stroke-width="1.9"/></svg>
<svg class="r" style="left:355.6px;top:873px;" width="13.4" height="14" viewBox="0 0 13.4 14"><rect x="0.7" y="0.7" width="12" height="12.6" rx="1" fill="#fafbfc" stroke="#78909c" stroke-width="1"/><g fill="#3f51b5"><rect x="2.4" y="2.8" width="1.8" height="1.8"/><rect x="2.4" y="6.1" width="1.8" height="1.8"/><rect x="2.4" y="9.4" width="1.8" height="1.8"/></g><path d="M5.4 3.7 H11 M5.4 7 H11 M5.4 10.3 H11" stroke="#90a4ae" stroke-width="1"/></svg>
<span class="t" style="transform:scaleX(0.9143);left:498.9px;top:872.15px;font-size:11px;line-height:16px;color:#7a7a7a;-webkit-text-stroke:0.1px;">ANLAGE (1)</span>
<svg class="r" style="left:562.4px;top:874.5px;" width="10" height="10" viewBox="0 0 10 10"><path d="M2.3 2.3 L7.7 7.7 M7.7 2.3 L2.3 7.7" stroke="#2b3a9a" stroke-width="1.9"/></svg>
<svg class="r" style="left:479.8px;top:872.4px;" width="12.88" height="12.88" viewBox="0 0 14 14"><path d="M0.5 13.8 V7.2 L3.6 5.6 V7.2 L6.8 5.6 V7.2 L9.8 5.6 V0.4 H13.6 V13.8 Z" fill="#5a5a62"/><g fill="#b7b2f0"><rect x="1.8" y="8.2" width="1.7" height="1.6"/><rect x="4.7" y="8.2" width="1.7" height="1.6"/><rect x="7.6" y="8.2" width="1.7" height="1.6"/><rect x="1.8" y="10.9" width="1.7" height="1.6"/><rect x="4.7" y="10.9" width="1.7" height="1.6"/><rect x="7.6" y="10.9" width="1.7" height="1.6"/></g></svg>
<span class="t" style="transform:scaleX(0.8752);left:612.2px;top:872.15px;font-size:11px;line-height:16px;color:#7a7a7a;-webkit-text-stroke:0.1px;">GESCHÄFTSPARTNER (1)</span>
<svg class="r" style="left:738.8px;top:874.5px;" width="10" height="10" viewBox="0 0 10 10"><path d="M2.3 2.3 L7.7 7.7 M7.7 2.3 L2.3 7.7" stroke="#2b3a9a" stroke-width="1.9"/></svg>
<svg class="r" style="left:592.2px;top:872.4px;" width="14" height="14" viewBox="0 0 14 14"><rect x="5.2" y="0.6" width="8.2" height="11" fill="#c9c9c9"/><g fill="#42a5f5"><rect x="6.1" y="1.8" width="1.7" height="1"/><rect x="8.5" y="1.8" width="1.7" height="1"/><rect x="10.9" y="1.8" width="1.7" height="1"/><rect x="6.1" y="3.8" width="1.7" height="1"/><rect x="8.5" y="3.8" width="1.7" height="1"/><rect x="10.9" y="3.8" width="1.7" height="1"/><rect x="8.5" y="5.8" width="1.7" height="1"/><rect x="10.9" y="5.8" width="1.7" height="1"/><rect x="8.5" y="7.8" width="1.7" height="1"/><rect x="10.9" y="7.8" width="1.7" height="1"/><rect x="8.5" y="9.6" width="1.7" height="1"/><rect x="10.9" y="9.6" width="1.7" height="1"/></g><path d="M3.4 7.2 Q3.4 4.6 6 4.6 Q8.6 4.6 8.6 7.2 Z" fill="#5c5f66"/><ellipse cx="6" cy="8.4" rx="2.3" ry="2.7" fill="#ffb74d"/><path d="M3.6 7.2 Q6 5.6 8.4 7.2 L8.4 6.4 Q6 4.6 3.6 6.4 Z" fill="#5c5f66"/><path d="M1.4 14 Q1.4 11.2 4.4 11 L6 12 L7.6 11 Q10.6 11.2 10.6 14 Z" fill="#5c6bc0"/><path d="M5.6 11.4 H6.4 L6.6 13.4 L6 14 L5.4 13.4 Z" fill="#ef5350"/></svg>
<span class="t" style="transform:scaleX(0.8884);left:788.6px;top:872.15px;font-size:11px;line-height:16px;color:#7a7a7a;-webkit-text-stroke:0.1px;">WECHSELBELEGE (0)</span>
<svg class="r" style="left:898.2px;top:874.5px;" width="10" height="10" viewBox="0 0 10 10"><path d="M2.3 2.3 L7.7 7.7 M7.7 2.3 L2.3 7.7" stroke="#2b3a9a" stroke-width="1.9"/></svg>
<svg class="r" style="left:768.8px;top:872.6px;" width="14.4" height="14.4" viewBox="0 0 14.4 14.4"><path d="M0.6 0.6 H6 L8.2 2.8 V11.6 H0.6 Z" fill="#fafbfc" stroke="#78909c" stroke-width=".9"/><path d="M2 3 H5 M2 5 H6.6 M2 7 H6.6" stroke="#90a4ae" stroke-width=".8"/><rect x="2" y="8.4" width="2.4" height="1.8" fill="#64b5f6"/><path d="M11.6 13.6 V5.4" stroke="#43a047" stroke-width="1.5"/><path d="M9.4 6.8 L11.6 3.6 L13.8 6.8 Z" fill="#43a047"/><path d="M7.8 6.4 V12" stroke="#43a047" stroke-width="1.5"/><path d="M5.6 10.8 L7.8 14 L10 10.8 Z" fill="#43a047"/></svg>
<span class="t" style="transform:scaleX(0.9046);left:948.2px;top:872.15px;font-size:11px;line-height:16px;color:#7a7a7a;-webkit-text-stroke:0.1px;">ABRECHNUNGSVERTRÄGE (2)</span>
<svg class="r" style="left:1103.9px;top:874.5px;" width="10" height="10" viewBox="0 0 10 10"><path d="M2.3 2.3 L7.7 7.7 M7.7 2.3 L2.3 7.7" stroke="#2b3a9a" stroke-width="1.9"/></svg>
<svg class="r" style="left:928.9px;top:872.4px;" width="14" height="14.4" viewBox="0 0 14 14.4"><path d="M0.6 0.6 H7.6 L10.2 3.2 V13 H0.6 Z" fill="#fdfdfd" stroke="#90a4ae" stroke-width=".9"/><path d="M7.6 0.6 L10.2 3.2 H7.6 Z" fill="#90a4ae"/><rect x="2" y="2.2" width="4" height="1.5" fill="#42a5e0"/><path d="M2 5.4 H8.4 M2 7.2 H8.4" stroke="#b0bec5" stroke-width=".8"/><path d="M2.4 11.6 L3.6 8.6 L4.8 11.6 Z" fill="#90b4ea"/><circle cx="9.6" cy="10" r="3.9" fill="#fbc02d"/><circle cx="9.6" cy="10" r="2.9" fill="#fdd54a"/><text x="9.5" y="11.9" text-anchor="middle" font-family="Liberation Sans, sans-serif" font-weight="700" font-size="5.4" fill="#e89c0c">€</text></svg>
<span class="t" style="transform:scaleX(0.8921);left:1154px;top:872.15px;font-size:11px;line-height:16px;color:#7a7a7a;-webkit-text-stroke:0.1px;">PREISKALKULATIONEN (0)</span>
<svg class="r" style="left:1286.3px;top:874.5px;" width="10" height="10" viewBox="0 0 10 10"><path d="M2.3 2.3 L7.7 7.7 M7.7 2.3 L2.3 7.7" stroke="#2b3a9a" stroke-width="1.9"/></svg>
<svg class="r" style="left:1135.7px;top:873px;" width="11.2" height="14.2" viewBox="0 0 11.2 14.2"><rect x="0.4" y="0.4" width="10.4" height="13.4" rx="1" fill="#5f6368"/><rect x="1.6" y="1.6" width="8" height="2.6" fill="#7cc142"/><g fill="#e8e8e8"><rect x="1.6" y="5.4" width="1.9" height="1.5"/><rect x="4.3" y="5.4" width="1.9" height="1.5"/><rect x="1.6" y="7.7" width="1.9" height="1.5"/><rect x="4.3" y="7.7" width="1.9" height="1.5"/><rect x="7" y="7.7" width="2.6" height="1.5"/><rect x="1.6" y="10" width="1.9" height="1.5"/><rect x="4.3" y="10" width="1.9" height="1.5"/><rect x="7" y="10" width="2.6" height="1.5"/><rect x="1.6" y="12" width="1.9" height="1.1"/><rect x="4.3" y="12" width="1.9" height="1.1"/><rect x="7" y="12" width="2.6" height="1.1"/></g><rect x="7" y="5.4" width="2.6" height="1.5" fill="#e53935"/></svg>
<span class="t" style="transform:scaleX(0.8523);left:1336px;top:872.15px;font-size:11px;line-height:16px;color:#7a7a7a;-webkit-text-stroke:0.1px;">AKTIVITÄTEN (0)</span>
<svg class="r" style="left:1419.3px;top:874.5px;" width="10" height="10" viewBox="0 0 10 10"><path d="M2.3 2.3 L7.7 7.7 M7.7 2.3 L2.3 7.7" stroke="#2b3a9a" stroke-width="1.9"/></svg>
<svg class="r" style="left:1317.1000000000001px;top:872.6px;" width="13.4" height="14.4" viewBox="0 0 13.4 14.4"><rect x="1.9" y="2.4" width="10.2" height="11.4" rx="1.3" fill="#fff" stroke="#546e7a" stroke-width="1.1"/><path d="M4 3.4 V2 Q4 1.5 4.5 1.5 H5.9 Q7 -0.4 8.1 1.5 H9.5 Q10 1.5 10 2 V3.4 Z" fill="#cfd8dc" stroke="#90a4ae" stroke-width=".5"/><path d="M4.3 8.4 L6.3 10.4 L10 6.2" fill="none" stroke="#3faa3f" stroke-width="1.7"/></svg>
<span class="t" style="transform:scaleX(0.9265);left:1468px;top:872.15px;font-size:11px;line-height:16px;color:#7a7a7a;-webkit-text-stroke:0.1px;">DOKUMENTE (0)</span>
<svg class="r" style="left:1557px;top:874.5px;" width="10" height="10" viewBox="0 0 10 10"><path d="M2.3 2.3 L7.7 7.7 M7.7 2.3 L2.3 7.7" stroke="#2b3a9a" stroke-width="1.9"/></svg>
<svg class="r" style="left:1450.6px;top:873px;" width="11.6" height="14" viewBox="0 0 11.2 14"><path d="M0.6 0.6 H7.4 L10.6 3.8 V13.4 H0.6 Z" fill="#f7f9fb" stroke="#90a4ae" stroke-width="1"/><path d="M7.2 0.8 V4 H10.4" fill="#e3e9ee" stroke="#90a4ae" stroke-width=".8"/></svg>
<div class="r" style="left:1665px;top:858px;width:10px;height:38px;background:#fdfdfd;border-left:1px solid #f0f0f0;"></div>
<svg class="r" style="left:1668.6px;top:876.2px;" width="5.4" height="7.6" viewBox="0 0 5.4 7.6"><path d="M4.4 0.8 L1.2 3.8 L4.4 6.8" fill="none" stroke="#2b3a9a" stroke-width="1.4"/></svg>
<div class="r" style="left:240px;top:225px;width:275px;height:607px;background:#fdfdfd;border:1px solid #cdcdcd;"></div>
<span class="t" style="transform:scaleX(0.9877);left:255px;top:246.21px;font-size:12px;line-height:16px;color:#1a1a1a;">Nachschlagefeld Übersicht</span>
<div class="r" style="left:497px;top:278px;width:16.700000000000003px;height:553px;background:#f0f0f0;"></div>
<div class="r" style="left:497px;top:294.5px;width:17.6px;height:487.29999999999995px;background:#c9c9c9;"></div>
<svg class="r" style="left:500.5px;top:283.3px;" width="9.4" height="6" viewBox="0 0 9.4 6"><path d="M0.8 5.1 L4.7 1 L8.6 5.1" fill="none" stroke="#555" stroke-width="2.3"/></svg>
<svg class="r" style="left:500.5px;top:819.7px;" width="9.4" height="6" viewBox="0 0 9.4 6"><path d="M0.8 0.9 L4.7 5 L8.6 0.9" fill="none" stroke="#555" stroke-width="2.3"/></svg>
<svg class="r" style="left:258.9px;top:296.0px;" width="14.0" height="14.0" viewBox="0 0 14 14"><path d="M0.5 13.8 V7.2 L3.6 5.6 V7.2 L6.8 5.6 V7.2 L9.8 5.6 V0.4 H13.6 V13.8 Z" fill="#8a8a8a"/><g fill="#bdbdf5"><rect x="1.8" y="8.2" width="1.7" height="1.6"/><rect x="4.7" y="8.2" width="1.7" height="1.6"/><rect x="7.6" y="8.2" width="1.7" height="1.6"/><rect x="1.8" y="10.9" width="1.7" height="1.6"/><rect x="4.7" y="10.9" width="1.7" height="1.6"/><rect x="7.6" y="10.9" width="1.7" height="1.6"/></g></svg>
<span class="t" style="transform:scaleX(0.9477);left:279.2px;top:298.30px;font-size:10px;line-height:14px;color:#111;font-weight:700;-webkit-text-stroke:0;">Anlage</span>
<div class="r" style="left:318.3px;top:303px;width:143.5px;height:1px;background:#d2d2d2;"></div>
<svg class="r" style="left:467.35px;top:301.90000000000003px;" width="10.5" height="6" viewBox="0 0 10.5 6"><path d="M0.8 5.1 L5.25 1 L9.7 5.1" fill="none" stroke="#4a4a4a" stroke-width="1.5"/></svg>
<span class="t" style="letter-spacing:0.329px;left:257.1px;top:328.85px;font-size:11px;line-height:14px;color:#858585;">Anlagennummer</span>
<span class="t" style="transform:scaleX(0.9844);left:396.3px;top:328.85px;font-size:11px;line-height:14px;color:#0a0a0a;">MALO-12995678...</span>
<span class="t" style="letter-spacing:0.145px;left:257.1px;top:350.05px;font-size:11px;line-height:14px;color:#858585;">MaLo/MeLo</span>
<span class="t" style="transform:scaleX(0.9763);left:396.3px;top:350.05px;font-size:11px;line-height:14px;color:#0a0a0a;">94295837492</span>
<span class="t" style="transform:scaleX(0.9511);left:257.1px;top:371.85px;font-size:11px;line-height:14px;color:#858585;">Straße</span>
<span class="t" style="letter-spacing:0.031px;left:396.3px;top:371.85px;font-size:11px;line-height:14px;color:#0a0a0a;">Meine Straße</span>
<span class="t" style="letter-spacing:0.124px;left:257.1px;top:393.25px;font-size:11px;line-height:14px;color:#858585;">Haus-Nr.</span>
<span class="t" style="transform:scaleX(0.9750);left:396.3px;top:393.25px;font-size:11px;line-height:14px;color:#0a0a0a;">57b</span>
<span class="t" style="transform:scaleX(0.8372);left:257.1px;top:414.65px;font-size:11px;line-height:14px;color:#858585;">PLZ</span>
<span class="t" style="transform:scaleX(0.9577);left:396.3px;top:414.65px;font-size:11px;line-height:14px;color:#0a0a0a;">35321</span>
<span class="t" style="letter-spacing:0.440px;left:257.1px;top:435.85px;font-size:11px;line-height:14px;color:#858585;">Ort</span>
<span class="t" style="letter-spacing:0.026px;left:396.3px;top:435.85px;font-size:11px;line-height:14px;color:#0a0a0a;">Laubach</span>
<svg class="r" style="left:257.1px;top:472.7px;" width="16.2" height="16.6" viewBox="0 0 14 14.4"><rect x="5.2" y="0.6" width="8.2" height="11" fill="#c9c9c9"/><g fill="#42a5f5"><rect x="6.1" y="1.8" width="1.7" height="1"/><rect x="8.5" y="1.8" width="1.7" height="1"/><rect x="10.9" y="1.8" width="1.7" height="1"/><rect x="6.1" y="3.8" width="1.7" height="1"/><rect x="8.5" y="3.8" width="1.7" height="1"/><rect x="10.9" y="3.8" width="1.7" height="1"/><rect x="8.5" y="5.8" width="1.7" height="1"/><rect x="10.9" y="5.8" width="1.7" height="1"/><rect x="8.5" y="7.8" width="1.7" height="1"/><rect x="10.9" y="7.8" width="1.7" height="1"/><rect x="8.5" y="9.6" width="1.7" height="1"/><rect x="10.9" y="9.6" width="1.7" height="1"/></g><path d="M3.4 7.2 Q3.4 4.6 6 4.6 Q8.6 4.6 8.6 7.2 Z" fill="#5c5f66"/><ellipse cx="6" cy="8.4" rx="2.3" ry="2.7" fill="#ffb74d"/><path d="M3.6 7.2 Q6 5.6 8.4 7.2 L8.4 6.4 Q6 4.6 3.6 6.4 Z" fill="#5c5f66"/><path d="M1.4 14 Q1.4 11.2 4.4 11 L6 12 L7.6 11 Q10.6 11.2 10.6 14 Z" fill="#5c6bc0"/><path d="M5.6 11.4 H6.4 L6.6 13.4 L6 14 L5.4 13.4 Z" fill="#ef5350"/></svg>
<span class="t" style="transform:scaleX(0.9238);left:279.2px;top:475.20px;font-size:10px;line-height:14px;color:#111;font-weight:700;-webkit-text-stroke:0;">Geschäftspartner</span>
<div class="r" style="left:363px;top:480px;width:98.80000000000001px;height:1px;background:#d2d2d2;"></div>
<svg class="r" style="left:467.35px;top:478.8px;" width="10.5" height="6" viewBox="0 0 10.5 6"><path d="M0.8 5.1 L5.25 1 L9.7 5.1" fill="none" stroke="#4a4a4a" stroke-width="1.5"/></svg>
<span class="t" style="transform:scaleX(0.8796);left:257.1px;top:505.95px;font-size:11px;line-height:14px;color:#858585;">Typ</span>
<span class="t" style="letter-spacing:0.340px;left:396.3px;top:505.95px;font-size:11px;line-height:14px;color:#0a0a0a;">Unternehmen</span>
<span class="t" style="transform:scaleX(0.9819);left:257.1px;top:527.86px;font-size:11px;line-height:14px;color:#858585;">Firma</span>
<span class="t" style="transform:scaleX(0.9768);left:396.3px;top:527.86px;font-size:11px;line-height:14px;color:#0a0a0a;">JSON Testfirma50</span>
<span class="t" style="transform:scaleX(0.9742);left:257.1px;top:549.05px;font-size:11px;line-height:14px;color:#858585;">Zusatz 1</span>
<span class="t" style="transform:scaleX(0.9558);left:396.3px;top:549.05px;font-size:11px;line-height:14px;color:#0a0a0a;">JSON Testzusatz...</span>
<span class="t" style="transform:scaleX(0.9932);left:257.1px;top:570.65px;font-size:11px;line-height:14px;color:#858585;">Zusatz 2</span>
<span class="t" style="transform:scaleX(0.9558);left:396.3px;top:570.65px;font-size:11px;line-height:14px;color:#0a0a0a;">JSON Testzusatz...</span>
<span class="t" style="transform:scaleX(0.9762);left:257.1px;top:592.05px;font-size:11px;line-height:14px;color:#858585;">Adresse</span>
<span class="t" style="transform:scaleX(0.9895);left:396.3px;top:592.05px;font-size:11px;line-height:14px;color:#0a0a0a;">Adresszusatz2</span>
<span class="t" style="transform:scaleX(0.9991);left:396.3px;top:613.65px;font-size:11px;line-height:14px;color:#0a0a0a;">Postfach 505000</span>
<span class="t" style="transform:scaleX(0.9206);left:257.1px;top:634.95px;font-size:11px;line-height:14px;color:#858585;">ERP GP-Nr.</span>
<span class="t" style="transform:scaleX(0.9723);left:396.3px;top:634.95px;font-size:11px;line-height:14px;color:#0a0a0a;">999299</span>
<svg class="r" style="left:257.9px;top:670.9000000000001px;" width="16.4" height="17.2" viewBox="0 0 14 14.6"><rect x="0.3" y="0.4" width="11.4" height="11.6" rx="1" fill="#5cb860"/><text x="5.9" y="9.6" text-anchor="middle" font-family="Liberation Sans, sans-serif" font-weight="700" font-size="9.6" fill="#fff">$</text><path d="M8.3 7.6 H11.6 L13.6 9.6 V14.2 H8.3 Z" fill="#fff" stroke="#90a4ae" stroke-width=".9"/><path d="M9.6 10 H11.4 M9.6 11.4 H12.2 M9.6 12.8 H11.6" stroke="#64b5f6" stroke-width=".8"/></svg>
<span class="t" style="transform:scaleX(0.9442);left:279.2px;top:674.40px;font-size:10px;line-height:14px;color:#111;font-weight:700;-webkit-text-stroke:0;">Vertragskonto</span>
<div class="r" style="left:350px;top:679px;width:111.80000000000001px;height:1px;background:#d2d2d2;"></div>
<svg class="r" style="left:467.35px;top:678.0px;" width="10.5" height="6" viewBox="0 0 10.5 6"><path d="M0.8 0.9 L5.25 5 L9.7 0.9" fill="none" stroke="#4a4a4a" stroke-width="1.5"/></svg>
<svg class="r" style="left:258.7px;top:720.0px;" width="15.6" height="16.2" viewBox="0 0 14 14.4"><path d="M0.6 0.6 H7.6 L10.2 3.2 V13 H0.6 Z" fill="#fdfdfd" stroke="#90a4ae" stroke-width=".9"/><path d="M7.6 0.6 L10.2 3.2 H7.6 Z" fill="#90a4ae"/><rect x="2" y="2.2" width="4" height="1.5" fill="#42a5e0"/><path d="M2 5.4 H8.4 M2 7.2 H8.4" stroke="#b0bec5" stroke-width=".8"/><path d="M2.4 11.6 L3.6 8.6 L4.8 11.6 Z" fill="#90b4ea"/><circle cx="9.6" cy="10" r="3.9" fill="#fbc02d"/><circle cx="9.6" cy="10" r="2.9" fill="#fdd54a"/><text x="9.5" y="11.9" text-anchor="middle" font-family="Liberation Sans, sans-serif" font-weight="700" font-size="5.4" fill="#e89c0c">€</text></svg>
<span class="t" style="transform:scaleX(0.9612);left:279.2px;top:722.50px;font-size:10px;line-height:14px;color:#111;font-weight:700;-webkit-text-stroke:0;">Akt. Abr.-Vertrag</span>
<div class="r" style="left:361.8px;top:728.3px;width:100.0px;height:1px;background:#d2d2d2;"></div>
<svg class="r" style="left:467.35px;top:726.0999999999999px;" width="10.5" height="6" viewBox="0 0 10.5 6"><path d="M0.8 0.9 L5.25 5 L9.7 0.9" fill="none" stroke="#4a4a4a" stroke-width="1.5"/></svg>
<svg class="r" style="left:257.9px;top:768.6px;" width="16" height="15.6" viewBox="0 0 16 15.6"><defs><linearGradient id="tz2" x1="0" y1="0" x2="0" y2="1"><stop offset="0" stop-color="#f6fbff"/><stop offset=".5" stop-color="#dcecfb"/><stop offset="1" stop-color="#8fc2ee"/></linearGradient></defs><path d="M6.4 0.6 H15.6 Q14 8 11 15 L0.4 11.4 Q4.6 6.4 6.4 0.6 Z" fill="url(#tz2)"/><path d="M6.4 0.8 H15.4" stroke="#cfe3f6" stroke-width=".7"/><path d="M0.6 10.2 L11.4 13.4 M0.6 11.6 L11 15" stroke="#7fb6e8" stroke-width=".7" opacity=".8"/></svg>
<span class="t" style="transform:scaleX(0.9420);left:279.2px;top:770.30px;font-size:10px;line-height:14px;color:#111;font-weight:700;-webkit-text-stroke:0;">Tarifzeitscheibe</span>
<div class="r" style="left:357px;top:776px;width:104.80000000000001px;height:1px;background:#d2d2d2;"></div>
<svg class="r" style="left:467.35px;top:773.9px;" width="10.5" height="6" viewBox="0 0 10.5 6"><path d="M0.8 0.9 L5.25 5 L9.7 0.9" fill="none" stroke="#4a4a4a" stroke-width="1.5"/></svg>
<div class="r" style="left:241px;top:812px;width:256px;height:19px;overflow:hidden"><div class="r" style="left:-241px;top:-812px;width:600px;height:900px">
<svg class="r" style="left:257.7px;top:815.8000000000001px;" width="16" height="16" viewBox="0 0 16 16"><rect x="0.2" y="0.2" width="13.2" height="1.8" fill="#b0bec5"/><rect x="0.2" y="0.2" width="1.1" height="1.8" fill="#f0a030"/><rect x="12.3" y="0.2" width="1.1" height="1.8" fill="#f0a030"/><rect x="2.6" y="2" width="8.8" height="10.4" fill="#e6ebee"/><rect x="2.6" y="2" width="2.6" height="10.4" fill="#d5dde2"/><path d="M6.4 3.8 H10.2 M6.4 5.8 H10.2 M6.4 7.8 H10.2" stroke="#aebdc6" stroke-width=".9"/><rect x="1.4" y="12.2" width="6" height="1.8" fill="#b0bec5"/><circle cx="11.8" cy="11.8" r="3.9" fill="#fdfdfd" stroke="#90caf9" stroke-width="1.2"/><path d="M11 10 L12.4 11.8 L11 13.8" fill="none" stroke="#6d5a5a" stroke-width="1"/></svg>
<span class="t" style="transform:scaleX(0.9545);left:279.2px;top:819.30px;font-size:10px;line-height:14px;color:#111;font-weight:700;-webkit-text-stroke:0;">Akt. Anlagenzeitsch.</span>
<div class="r" style="left:379.3px;top:825px;width:82.5px;height:1px;background:#d2d2d2;"></div>
<svg class="r" style="left:467.35px;top:822.9px;" width="10.5" height="6" viewBox="0 0 10.5 6"><path d="M0.8 0.9 L5.25 5 L9.7 0.9" fill="none" stroke="#4a4a4a" stroke-width="1.5"/></svg>
</div></div>
<div class="r" style="left:530px;top:225px;width:371px;height:607px;background:#fdfdfd;border:1px solid #cdcdcd;"></div>
<span class="t" style="letter-spacing:0.093px;left:545px;top:246.21px;font-size:12px;line-height:16px;color:#1a1a1a;">Kommentare und Aktivitäten</span>
<div class="r" style="left:884px;top:278px;width:15.9px;height:553px;background:#f0f0f0;"></div>
<div class="r" style="left:884px;top:294.5px;width:16.8px;height:466.1px;background:#c9c9c9;"></div>
<svg class="r" style="left:887.5px;top:283.3px;" width="9.4" height="6" viewBox="0 0 9.4 6"><path d="M0.8 5.1 L4.7 1 L8.6 5.1" fill="none" stroke="#555" stroke-width="2.3"/></svg>
<svg class="r" style="left:887.5px;top:819.7px;" width="9.4" height="6" viewBox="0 0 9.4 6"><path d="M0.8 0.9 L4.7 5 L8.6 0.9" fill="none" stroke="#555" stroke-width="2.3"/></svg>
<div class="r" style="left:543px;top:348px;width:328px;height:140px;background:#efefef;border-radius:5px;"></div>
<svg class="r" style="left:689px;top:369px;" width="36" height="31" viewBox="0 0 36 31"><path d="M18 1 C27.6 1 34.2 7 34.2 14.4 C34.2 22.4 27 28.4 18 28.4 C15.4 28.4 12.6 27.8 10.6 26.8 C8.6 28.6 5.8 29.6 3.6 29.6 C5 28 5.8 26 5.8 24 C2.8 21.6 1.2 18 1.2 14.4 C1.2 7 8.4 1 18 1 Z" fill="#ddeeff" stroke="#5b9bd5" stroke-width="1"/></svg>
<span class="t" style="transform:scaleX(0.9139);left:643.4px;top:412.31px;font-size:12px;line-height:16px;color:#333;font-weight:700;-webkit-text-stroke:0;">Noch keine Kommentare</span>
<span class="t" style="transform:scaleX(0.9850);left:561.4px;top:431.30px;font-size:10px;line-height:13px;color:#333;-webkit-text-stroke:0.12px;">Schreiben Sie einen Kommentar, um eine Diskussion zu beginnen!</span>
<span class="t" style="transform:scaleX(0.9736);left:582.2px;top:444.10px;font-size:10px;line-height:13px;color:#333;-webkit-text-stroke:0.12px;">Erwähnen Sie einen Mitarbeiter mit <span style="color:#1a1a9a">@KÜRZEL</span>, um Ihn zu</span>
<span class="t" style="letter-spacing:0.026px;left:672.2px;top:457.10px;font-size:10px;line-height:13px;color:#333;-webkit-text-stroke:0.12px;">benachrichtigen</span>
<span class="t" style="transform:scaleX(0.9927);left:647.1px;top:511.73px;font-size:11.5px;line-height:16px;color:#666;">Sie können aber auch...</span>
<div class="r" style="left:554px;top:553px;width:140px;height:86px;background:#efefef;border-radius:5px;"></div>
<div class="r" style="left:722px;top:553px;width:138px;height:86px;background:#efefef;border-radius:5px;"></div>
<div class="r" style="left:567px;top:605.6px;width:114px;height:20.4px;background:#2f4898;border-radius:3px;"></div>
<div class="r" style="left:734px;top:605.6px;width:113px;height:20.4px;background:#2f4898;border-radius:3px;"></div>
<span class="t" style="transform:scaleX(0.9790);left:580.2px;top:608.21px;font-size:12px;line-height:16px;color:#fff;">Aktivität erstellen</span>
<span class="t" style="transform:scaleX(0.9382);left:747.4px;top:608.21px;font-size:12px;line-height:16px;color:#fff;">E-Mail versenden</span>
<svg class="r" style="left:613px;top:564.4px;" width="22" height="30" viewBox="0 0 22 30"><rect x="1.2" y="5" width="19.4" height="24" rx="2.6" fill="#fff" stroke="#37474f" stroke-width="1.6"/><circle cx="10.9" cy="3" r="1.9" fill="#fff" stroke="#90a4ae" stroke-width="1.1"/><path d="M4.4 5.2 Q4.4 4 5.6 4 H16.2 Q17.4 4 17.4 5.2 V8.2 H4.4 Z" fill="#a9b6bd"/><path d="M4.4 7.4 H17.4 V8.4 H4.4 Z" fill="#8d9da6"/><path d="M5.2 17.6 L9.4 22 L17 13.2" fill="none" stroke="#43a843" stroke-width="2.8"/></svg>
<svg class="r" style="left:777.6px;top:568.4px;" width="28" height="23" viewBox="0 0 28 23"><rect x="0.4" y="0.4" width="23.4" height="16" rx="1.6" fill="#cfd8dc"/><path d="M0.8 1 L12 10 L23.4 1" fill="none" stroke="#6b8290" stroke-width="1"/><path d="M11.4 22 V13.8 Q11.4 10.6 14.6 10.6 H18.6 V7.8 L27.4 13.2 L18.6 18.6 V15.4 H16.4 V22 Z" fill="#9c27b0"/></svg>
<div class="r" style="left:531px;top:745px;width:353px;height:1px;background:#e6e6e6;"></div>
<span class="t" style="transform:scaleX(0.9026);left:544.3px;top:755.61px;font-size:12px;line-height:16px;color:#8c8c8c;-webkit-text-stroke:0;">@</span>
<svg class="r" style="left:567.6px;top:756.6px;" width="11.4" height="13.6" viewBox="0 0 11.4 13.6"><rect x="0.7" y="1.8" width="10" height="11" rx="1.2" fill="#fdfdfd" stroke="#8c8c8c" stroke-width="1"/><path d="M3.2 2 V1.2 H4.4 Q5.7 -0.2 7 1.2 H8.2 V2 Z" fill="#ccc" stroke="#999" stroke-width=".5"/><path d="M3.2 10.4 L7.8 5.4" stroke="#999" stroke-width="1.2"/></svg>
<svg class="r" style="left:590.6px;top:759.4px;" width="12.6" height="8.6" viewBox="0 0 12.6 8.6"><rect x="0.2" y="0.2" width="12.2" height="8.2" rx="1" fill="#d4d4d4"/><path d="M0.6 0.8 L6.3 5.2 L12 0.8" fill="none" stroke="#f2f2f2" stroke-width="1"/></svg>
<svg class="r" style="left:853.5px;top:756.5px;" width="17" height="15" viewBox="0 0 17 15"><path d="M0.6 0.8 L16.4 7.5 L0.6 14.2 L2.2 8.6 L10.4 7.5 L2.2 6.4 Z" fill="#777"/></svg>
<div class="r" style="left:537.8px;top:782.8px;width:28.8px;height:28.8px;border-radius:50%;background:#2f4898"></div>
<span class="t" style="transform:scaleX(0.8082);left:542.6px;top:792.28px;font-size:10.5px;line-height:12px;color:#fff;-webkit-text-stroke:0;">SHO</span>
<div class="r" style="left:574px;top:782px;width:302px;height:31px;background:#fdfdfd;border:1px solid #dcdce2;border-radius:16px;"></div>
<span class="t" style="transform:scaleX(0.9388);left:586.3px;top:790.41px;font-size:12px;line-height:16px;color:#777;">Kommentar schreiben...</span>
<div class="r" style="left:916px;top:225px;width:371px;height:607px;background:#fdfdfd;border:1px solid #cdcdcd;"></div>
<span class="t" style="transform:scaleX(0.9850);left:930.8px;top:246.21px;font-size:12px;line-height:16px;color:#1a1a1a;">Streamline</span>
<div class="r" style="left:955.5px;top:312px;width:1px;height:44px;background:#a9a9a9;"></div>
<svg class="r" style="left:951px;top:306.5px;" width="10" height="10" viewBox="0 0 10 10"><circle cx="5" cy="5" r="4.3" fill="#2f4898" stroke="#d8dcee" stroke-width=".8"/></svg>
<svg class="r" style="left:951px;top:351.2px;" width="10" height="10" viewBox="0 0 10 10"><circle cx="5" cy="5" r="4.3" fill="#2f4898" stroke="#d8dcee" stroke-width=".8"/></svg>
<div class="r" style="left:1004px;top:405px;width:195px;height:115px;background:#efefef;border-radius:5px;"></div>
<svg class="r" style="left:1084.6px;top:426.8px;" width="34" height="28" viewBox="0 0 34 28"><circle cx="1.6" cy="1.6" r="1.1" fill="none" stroke="#b5c0c0" stroke-width=".7"/><rect x="5.4" y="1.1" width="28" height="1" fill="#b5c0c0"/><circle cx="1.6" cy="9.9" r="1.1" fill="none" stroke="#b5c0c0" stroke-width=".7"/><rect x="5.4" y="9.4" width="28" height="1" fill="#b5c0c0"/><circle cx="1.6" cy="18.1" r="1.1" fill="none" stroke="#b5c0c0" stroke-width=".7"/><rect x="5.4" y="17.6" width="28" height="1" fill="#b5c0c0"/><circle cx="1.6" cy="26.4" r="1.1" fill="none" stroke="#b5c0c0" stroke-width=".7"/><rect x="5.4" y="25.9" width="28" height="1" fill="#b5c0c0"/></svg>
<span class="t" style="transform:scaleX(0.9147);left:1058.5px;top:470.01px;font-size:12px;line-height:16px;color:#333;font-weight:700;-webkit-text-stroke:0;">Nichts gefunden</span>
<span class="t" style="transform:scaleX(0.9721);left:1017.4px;top:490.60px;font-size:10px;line-height:13px;color:#333;-webkit-text-stroke:0.12px;">Es wurden keine Datensätze gefunden.</span>
</div></body></html>
